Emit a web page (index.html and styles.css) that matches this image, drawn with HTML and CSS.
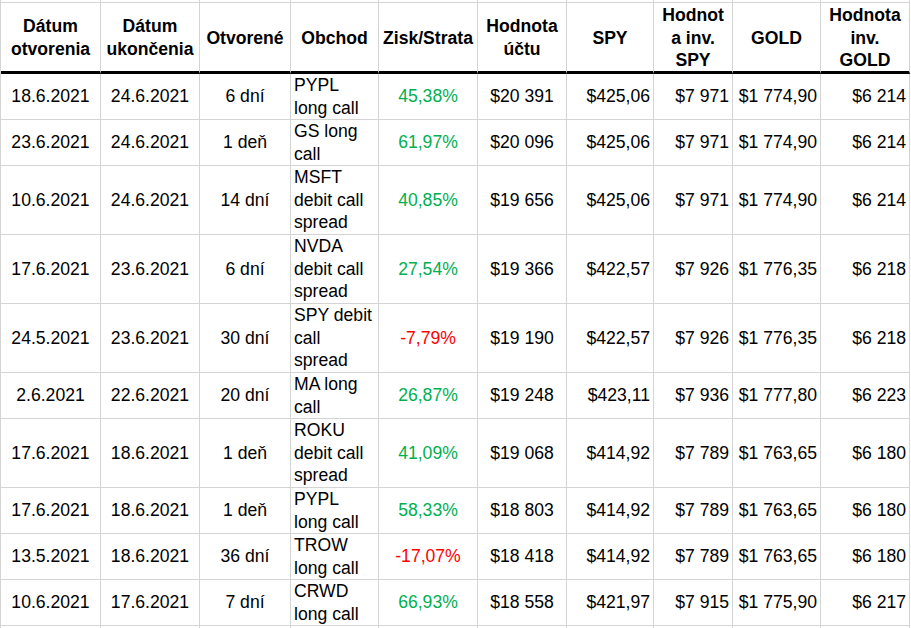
FILE: index.html
```html
<!DOCTYPE html>
<html lang="sk">
<head>
<meta charset="utf-8">
<title>Obchody</title>
<link rel="stylesheet" href="styles.css">
</head>
<body>
<div class="sheet">
  <div class="row stub top">
    <div class="c"></div><div class="c"></div><div class="c"></div><div class="c"></div><div class="c"></div><div class="c"></div><div class="c"></div><div class="c"></div><div class="c"></div><div class="c"></div>
  </div>
  <div class="row head">
    <div class="c">Dátum<br>otvorenia</div>
    <div class="c">Dátum<br>ukončenia</div>
    <div class="c">Otvorené</div>
    <div class="c">Obchod</div>
    <div class="c">Zisk/Strata</div>
    <div class="c">Hodnota<br>účtu</div>
    <div class="c">SPY</div>
    <div class="c">Hodnot<br>a inv.<br>SPY</div>
    <div class="c">GOLD</div>
    <div class="c">Hodnota<br>inv.<br>GOLD</div>
  </div>

  <div class="row r2">
    <div class="c mid">18.6.2021</div><div class="c mid">24.6.2021</div><div class="c mid">6 dní</div>
    <div class="c trade">PYPL<br>long call</div>
    <div class="c mid pos">45,38%</div><div class="c mid">$20 391</div>
    <div class="c num">$425,06</div><div class="c num">$7 971</div><div class="c num">$1 774,90</div><div class="c num">$6 214</div>
  </div>
  <div class="row r2">
    <div class="c mid">23.6.2021</div><div class="c mid">24.6.2021</div><div class="c mid">1 deň</div>
    <div class="c trade">GS long<br>call</div>
    <div class="c mid pos">61,97%</div><div class="c mid">$20 096</div>
    <div class="c num">$425,06</div><div class="c num">$7 971</div><div class="c num">$1 774,90</div><div class="c num">$6 214</div>
  </div>
  <div class="row r3">
    <div class="c mid">10.6.2021</div><div class="c mid">24.6.2021</div><div class="c mid">14 dní</div>
    <div class="c trade">MSFT<br>debit call<br>spread</div>
    <div class="c mid pos">40,85%</div><div class="c mid">$19 656</div>
    <div class="c num">$425,06</div><div class="c num">$7 971</div><div class="c num">$1 774,90</div><div class="c num">$6 214</div>
  </div>
  <div class="row r3">
    <div class="c mid">17.6.2021</div><div class="c mid">23.6.2021</div><div class="c mid">6 dní</div>
    <div class="c trade">NVDA<br>debit call<br>spread</div>
    <div class="c mid pos">27,54%</div><div class="c mid">$19 366</div>
    <div class="c num">$422,57</div><div class="c num">$7 926</div><div class="c num">$1 776,35</div><div class="c num">$6 218</div>
  </div>
  <div class="row r3">
    <div class="c mid">24.5.2021</div><div class="c mid">23.6.2021</div><div class="c mid">30 dní</div>
    <div class="c trade">SPY debit<br>call<br>spread</div>
    <div class="c mid neg">-7,79%</div><div class="c mid">$19 190</div>
    <div class="c num">$422,57</div><div class="c num">$7 926</div><div class="c num">$1 776,35</div><div class="c num">$6 218</div>
  </div>
  <div class="row r2">
    <div class="c mid">2.6.2021</div><div class="c mid">22.6.2021</div><div class="c mid">20 dní</div>
    <div class="c trade">MA long<br>call</div>
    <div class="c mid pos">26,87%</div><div class="c mid">$19 248</div>
    <div class="c num">$423,11</div><div class="c num">$7 936</div><div class="c num">$1 777,80</div><div class="c num">$6 223</div>
  </div>
  <div class="row r3">
    <div class="c mid">17.6.2021</div><div class="c mid">18.6.2021</div><div class="c mid">1 deň</div>
    <div class="c trade">ROKU<br>debit call<br>spread</div>
    <div class="c mid pos">41,09%</div><div class="c mid">$19 068</div>
    <div class="c num">$414,92</div><div class="c num">$7 789</div><div class="c num">$1 763,65</div><div class="c num">$6 180</div>
  </div>
  <div class="row r2">
    <div class="c mid">17.6.2021</div><div class="c mid">18.6.2021</div><div class="c mid">1 deň</div>
    <div class="c trade">PYPL<br>long call</div>
    <div class="c mid pos">58,33%</div><div class="c mid">$18 803</div>
    <div class="c num">$414,92</div><div class="c num">$7 789</div><div class="c num">$1 763,65</div><div class="c num">$6 180</div>
  </div>
  <div class="row r2">
    <div class="c mid">13.5.2021</div><div class="c mid">18.6.2021</div><div class="c mid">36 dní</div>
    <div class="c trade">TROW<br>long call</div>
    <div class="c mid neg">-17,07%</div><div class="c mid">$18 418</div>
    <div class="c num">$414,92</div><div class="c num">$7 789</div><div class="c num">$1 763,65</div><div class="c num">$6 180</div>
  </div>
  <div class="row r2">
    <div class="c mid">10.6.2021</div><div class="c mid">17.6.2021</div><div class="c mid">7 dní</div>
    <div class="c trade">CRWD<br>long call</div>
    <div class="c mid pos">66,93%</div><div class="c mid">$18 558</div>
    <div class="c num">$421,97</div><div class="c num">$7 915</div><div class="c num">$1 775,90</div><div class="c num">$6 217</div>
  </div>

  <div class="row stub bottom">
    <div class="c"></div><div class="c"></div><div class="c"></div><div class="c"></div><div class="c"></div><div class="c"></div><div class="c"></div><div class="c"></div><div class="c"></div><div class="c"></div>
  </div>
</div>
</body>
</html>
```
FILE: styles.css
```css
html, body {
  margin: 0;
  padding: 0;
  background: #ffffff;
}

body {
  font-family: "Liberation Sans", Arial, sans-serif;
  font-size: 17.6px;
  line-height: 22.67px;
  color: #000000;
  overflow: hidden;
}

.sheet {
  width: 910px;
  border-left: 1px solid #d4d4d4;
}

.row {
  display: grid;
  grid-template-columns: 100px 99px 91px 88px 99px 89px 87px 79px 88px 89px;
}

.c {
  box-sizing: border-box;
  border-right: 1px solid #d4d4d4;
  border-bottom: 1px solid #d4d4d4;
  display: flex;
  align-items: center;
  overflow: hidden;
  white-space: nowrap;
}

.stub.top { height: 3px; }
.stub.bottom { height: 2px; }
.stub.bottom .c { border-bottom: none; }

.head { height: 71px; }
.head .c {
  border-bottom: 3px solid #000000;
  justify-content: center;
  text-align: center;
  font-weight: bold;
  padding-top: 2px;
}

.r2 { height: 46px; }
.r3 { height: 69px; }

.mid {
  justify-content: center;
  text-align: center;
}

.num {
  justify-content: flex-end;
  padding-right: 3px;
}

.trade {
  align-items: flex-start;
  padding-left: 3px;
}

.pos { color: #00b050; }
.neg { color: #ff0000; }
```
